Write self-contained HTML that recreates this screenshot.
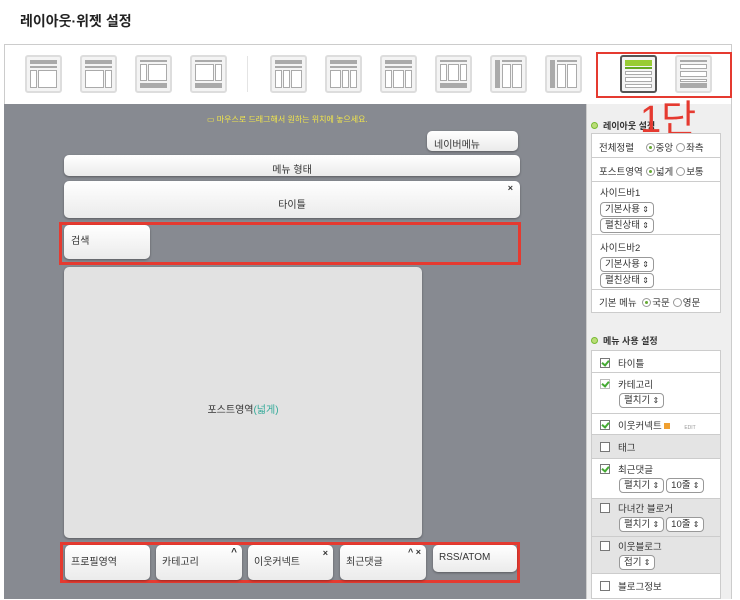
<!DOCTYPE html>
<html><head><meta charset="utf-8"><style>
*{margin:0;padding:0;box-sizing:border-box}
body{width:740px;height:599px;background:#fff;position:relative;overflow:hidden;font-family:"Liberation Sans","Noto Sans CJK KR",sans-serif;font-size:10px;color:#333}
.a{position:absolute}
.title{left:20px;top:11px;font-size:14px;font-weight:bold;color:#222}
.tb{left:4px;top:44px;width:728px;height:60px;border:1px solid #ccc;border-bottom:none;background:#fff}
.ic{width:37px;height:38px;border:2px solid #ddd;border-radius:3px;background:#f4f4f4}
.ic i{position:absolute;display:block;background:#aaa}
.ic b{position:absolute;display:block;border:1px solid #aaa;background:#fff}
.gray{left:4px;top:104px;width:582px;height:495px;background:#878a91}
.rp{left:586px;top:104px;width:146px;height:495px;background:#efefef;border-left:1px solid #ccc;border-right:1px solid #ccc}
.w{background:linear-gradient(#fff,#ebebeb);border-radius:5px;box-shadow:0 1px 2px rgba(0,0,0,.35);font-size:10px;color:#333}
.red{border:3px solid #e53a30}
.box{background:#fff;border:1px solid #ccc;font-size:9.5px;white-space:nowrap}
.row{position:absolute;left:0;width:100%;border-bottom:1px solid #ccc}
.sel{display:inline-block;border:1px solid #999;border-radius:4px;padding:0 4px;height:15px;line-height:13px;font-size:9.5px;background:#fff;margin-right:2px}
.sel:after{content:" ⇕";font-size:8px}
.rad{display:inline-block;width:9px;height:9px;border:1px solid #999;border-radius:50%;vertical-align:-1px;margin:0 1px 0 3px;background:#fff;position:relative}
.rad.on:after{content:"";position:absolute;left:2px;top:2px;width:3px;height:3px;border-radius:50%;background:#6a3}
.cb{display:inline-block;width:10px;height:10px;border:1px solid #777;background:#fff;vertical-align:-1px;margin-right:8px;position:relative}
.cb.on:after{content:"";position:absolute;left:2px;top:0px;width:3px;height:5px;border:solid #4a3;border-width:0 2px 2px 0;transform:rotate(40deg)}
.hd{font-size:9px;color:#333;font-weight:bold}
.hd:before{content:"";display:inline-block;width:5px;height:5px;border:1px solid #7b3;border-radius:50%;margin-right:5px;background:#bd7}
</style></head><body>
<div class="a title">레이아웃·위젯 설정</div>
<div class="a tb"></div>
<div class="a" style="left:247px;top:56px;width:1px;height:36px;background:#e4e4e4"></div>
<div class="a red" style="left:596px;top:52px;width:136px;height:46px;border-width:2px"></div>

<div class="a gray"></div>
<div class="a rp"></div>

<div class="a" style="left:207px;top:114px;font-size:8px;color:#f2e64a">▭ 마우스로 드래그해서 원하는 위치에 놓으세요.</div>
<div class="a w" style="left:427px;top:131px;width:91px;height:20px;padding:5px 7px">네이버메뉴</div>
<div class="a w" style="left:64px;top:155px;width:456px;height:21px;text-align:center;padding-top:6px">메뉴 형태</div>
<div class="a w" style="left:64px;top:181px;width:456px;height:37px;text-align:center;padding-top:15px">타이틀<span class="a" style="right:7px;top:2px;font-size:9px;font-weight:bold">×</span></div>
<div class="a red" style="left:59px;top:222px;width:462px;height:43px"></div>
<div class="a w" style="left:64px;top:225px;width:86px;height:34px;padding:7px">검색</div>
<div class="a w" style="left:64px;top:267px;width:358px;height:271px;background:#e2e2e2;text-align:center;padding-top:134px">포스트영역<span style="color:#3a9">(넓게)</span></div>
<div class="a red" style="left:60px;top:542px;width:460px;height:41px"></div>
<div class="a w" style="left:65px;top:545px;width:85px;height:35px;padding:8px 6px">프로필영역</div>
<div class="a w" style="left:156px;top:545px;width:86px;height:35px;padding:8px 6px">카테고리<span class="a" style="right:5px;top:2px;font-weight:bold">^</span></div>
<div class="a w" style="left:248px;top:545px;width:85px;height:35px;padding:8px 6px">이웃커넥트<span class="a" style="right:5px;top:3px;font-weight:bold;font-size:9px">×</span></div>
<div class="a w" style="left:340px;top:545px;width:86px;height:35px;padding:8px 6px">최근댓글<span class="a" style="right:5px;top:2px;font-weight:bold;font-size:9px">^ ×</span></div>
<div class="a w" style="left:433px;top:545px;width:84px;height:27px;padding:7px 6px">RSS/ATOM</div>

<div class="a hd" style="left:591px;top:119px">레이아웃 설정</div>
<div class="a" style="left:640px;top:98px;font-size:38px;color:#e53a30;line-height:44px">1단</div>
<div class="a box" style="left:591px;top:133px;width:130px;height:180px">
 <div class="row" style="top:0;height:24px;padding:6px 7px">전체정렬 <span style="margin-left:6px"></span><span class="rad on"></span>중앙<span class="rad"></span>좌측</div>
 <div class="row" style="top:24px;height:24px;padding:6px 7px">포스트영역<span class="rad on"></span>넓게<span class="rad"></span>보통</div>
 <div class="row" style="top:48px;height:53px;padding:4px 8px;line-height:16px">사이드바1<br><span class="sel">기본사용</span><br><span class="sel">펼친상태</span></div>
 <div class="row" style="top:101px;height:55px;padding:6px 8px;line-height:16px">사이드바2<br><span class="sel">기본사용</span><br><span class="sel">펼친상태</span></div>
 <div class="row" style="top:156px;height:23px;padding:5px 7px;border:none">기본 메뉴 <span class="rad on"></span>국문<span class="rad"></span>영문</div>
</div>
<div class="a hd" style="left:591px;top:334px">메뉴 사용 설정</div>
<div class="a box" style="left:591px;top:350px;width:130px;height:249px">
 <div class="row" style="top:0;height:22px;padding:5px 8px"><span class="cb on"></span>타이틀</div>
 <div class="row" style="top:22px;height:41px;padding:5px 8px;line-height:15px"><span class="cb on" style="border-color:#bbb"></span>카테고리<br><span style="margin-left:19px" class="sel">펼치기</span></div>
 <div class="row" style="top:63px;height:21px;padding:4px 8px"><span class="cb on"></span>이웃커넥트 <span style="display:inline-block;width:6px;height:6px;background:#f0a030"></span><span style="font-size:5px;color:#999;margin-left:14px">EDIT</span></div>
 <div class="row" style="top:84px;height:24px;padding:5px 8px;background:#e4e4e4"><span class="cb"></span>태그</div>
 <div class="row" style="top:108px;height:40px;padding:4px 8px;line-height:15px"><span class="cb on"></span>최근댓글<br><span style="margin-left:19px" class="sel">펼치기</span><span class="sel">10줄</span></div>
 <div class="row" style="top:148px;height:38px;padding:3px 8px;line-height:15px;background:#e4e4e4"><span class="cb"></span>다녀간 블로거<br><span style="margin-left:19px" class="sel">펼치기</span><span class="sel">10줄</span></div>
 <div class="row" style="top:186px;height:37px;padding:3px 8px;line-height:15px;background:#e4e4e4"><span class="cb"></span>이웃블로그<br><span style="margin-left:19px" class="sel">접기</span></div>
 <div class="row" style="top:223px;height:26px;padding:5px 8px;border:none"><span class="cb"></span>블로그정보</div>
</div>

<div class="a ic" style="left:25px;top:55px"><i style="left:3px;top:3px;width:27px;height:4px"></i><i style="left:3px;top:9px;width:27px;height:2px"></i><b style="left:3px;top:13px;width:7px;height:18px"></b><b style="left:11px;top:13px;width:19px;height:18px"></b></div>
<div class="a ic" style="left:80px;top:55px"><i style="left:3px;top:3px;width:27px;height:4px"></i><i style="left:3px;top:9px;width:27px;height:2px"></i><b style="left:3px;top:13px;width:19px;height:18px"></b><b style="left:23px;top:13px;width:7px;height:18px"></b></div>
<div class="a ic" style="left:135px;top:55px"><i style="left:3px;top:3px;width:27px;height:2px"></i><b style="left:3px;top:7px;width:7px;height:17px"></b><b style="left:11px;top:7px;width:19px;height:17px"></b><i style="left:3px;top:26px;width:27px;height:5px"></i></div>
<div class="a ic" style="left:190px;top:55px"><i style="left:3px;top:3px;width:27px;height:2px"></i><b style="left:3px;top:7px;width:19px;height:17px"></b><b style="left:23px;top:7px;width:7px;height:17px"></b><i style="left:3px;top:26px;width:27px;height:5px"></i></div>
<div class="a ic" style="left:270px;top:55px"><i style="left:3px;top:3px;width:27px;height:4px"></i><i style="left:3px;top:9px;width:27px;height:2px"></i><b style="left:3px;top:13px;width:7px;height:18px"></b><b style="left:11px;top:13px;width:7px;height:18px"></b><b style="left:19px;top:13px;width:11px;height:18px"></b></div>
<div class="a ic" style="left:325px;top:55px"><i style="left:3px;top:3px;width:27px;height:4px"></i><i style="left:3px;top:9px;width:27px;height:2px"></i><b style="left:3px;top:13px;width:11px;height:18px"></b><b style="left:15px;top:13px;width:7px;height:18px"></b><b style="left:23px;top:13px;width:7px;height:18px"></b></div>
<div class="a ic" style="left:380px;top:55px"><i style="left:3px;top:3px;width:27px;height:4px"></i><i style="left:3px;top:9px;width:27px;height:2px"></i><b style="left:3px;top:13px;width:7px;height:18px"></b><b style="left:11px;top:13px;width:11px;height:18px"></b><b style="left:23px;top:13px;width:7px;height:18px"></b></div>
<div class="a ic" style="left:435px;top:55px"><i style="left:3px;top:3px;width:27px;height:2px"></i><b style="left:3px;top:7px;width:7px;height:17px"></b><b style="left:11px;top:7px;width:11px;height:17px"></b><b style="left:23px;top:7px;width:7px;height:17px"></b><i style="left:3px;top:26px;width:27px;height:5px"></i></div>
<div class="a ic" style="left:490px;top:55px"><i style="left:3px;top:3px;width:5px;height:28px"></i><i style="left:10px;top:3px;width:20px;height:2px"></i><b style="left:10px;top:7px;width:9px;height:24px"></b><b style="left:20px;top:7px;width:10px;height:24px"></b></div>
<div class="a ic" style="left:545px;top:55px"><i style="left:3px;top:3px;width:5px;height:28px"></i><i style="left:10px;top:3px;width:20px;height:2px"></i><b style="left:10px;top:7px;width:9px;height:24px"></b><b style="left:20px;top:7px;width:10px;height:24px"></b></div>
<div class="a ic" style="left:620px;top:55px;border-color:#555"><i style="left:3px;top:3px;width:27px;height:6px;background:#9c3"></i><i style="left:3px;top:10px;width:27px;height:2px;background:#6a2"></i><b style="left:3px;top:14px;width:27px;height:4px"></b><b style="left:3px;top:20px;width:27px;height:5px"></b><b style="left:3px;top:27px;width:27px;height:4px"></b></div>
<div class="a ic" style="left:675px;top:55px"><i style="left:3px;top:3px;width:27px;height:2px"></i><b style="left:3px;top:7px;width:27px;height:5px"></b><b style="left:3px;top:14px;width:27px;height:6px"></b><b style="left:3px;top:22px;width:27px;height:3px"></b><i style="left:3px;top:26px;width:27px;height:5px"></i></div>
</body></html>
